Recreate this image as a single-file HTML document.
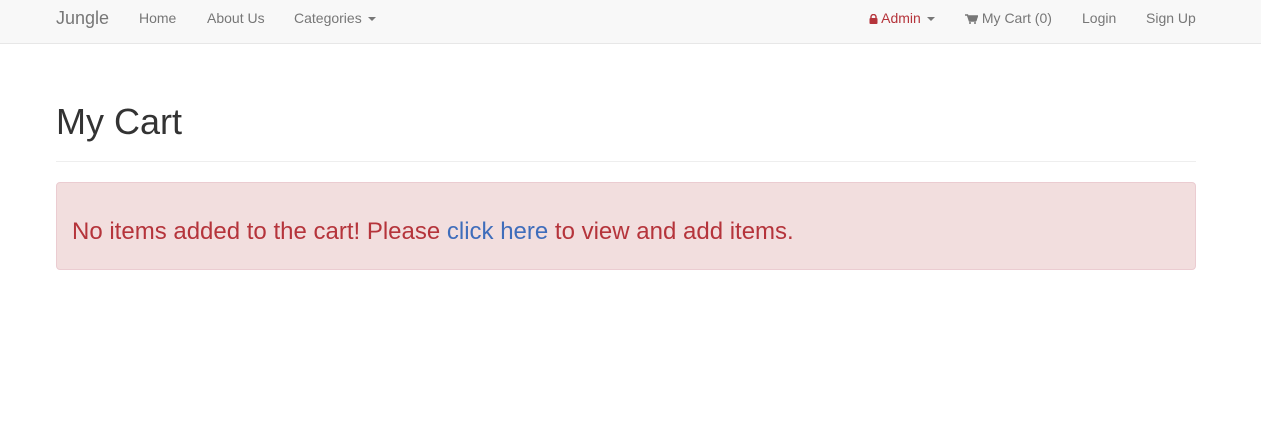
<!DOCTYPE html>
<html><head><style>
body{margin:0;font-family:"Liberation Sans",sans-serif;font-size:14px;color:#333;background:#fff;width:1261px;height:435px;overflow:hidden}
.nav{position:absolute;top:0;left:0;width:1261px;height:43px;background:#f8f8f8;border-bottom:1px solid #e7e7e7}
.nav span{position:absolute;top:0;line-height:36px;color:#777;white-space:nowrap}
.caret{display:inline-block;width:0;height:0;border-top:4px solid #777;border-left:4px solid transparent;border-right:4px solid transparent;vertical-align:middle;margin-left:6px}
h1{position:absolute;left:56px;top:101px;margin:0;font-size:36px;font-weight:500;line-height:42px;color:#333}
.hr{position:absolute;left:56px;top:161px;width:1140px;border-top:1px solid #eee}
.alert{position:absolute;left:56px;top:182px;width:1138px;height:86px;background:#f2dede;border:1px solid #ebccd1;border-radius:4px}
.alert p{margin:0;position:absolute;left:15px;top:35px;font-size:24px;line-height:28px;color:#b5343b}
.alert a{color:#3f6dbb}
</style></head><body>
<div class="nav">
<span style="left:56px;font-size:18px">Jungle</span>
<span style="left:139px">Home</span>
<span style="left:207px">About Us</span>
<span style="left:294px">Categories<i class="caret"></i></span>
<span style="left:869px;color:#b5343b"><svg width="9" height="10" viewBox="0 0 9 10" style="vertical-align:-1px"><path d="M2 4V3a2.5 2.5 0 0 1 5 0v1" fill="none" stroke="#b5343b" stroke-width="1.4"/><rect x="0.5" y="4" width="8" height="6" rx="1" fill="#b5343b"/></svg> Admin<i class="caret"></i></span>
<span style="left:965px"><svg width="13" height="10" viewBox="0 0 13 10" style="vertical-align:-1px"><path d="M0 1h2.5l2 6h6l2-5H3.5" fill="none" stroke="#777" stroke-width="1.5"/><rect x="4" y="2.5" width="8" height="4" fill="#777"/><circle cx="5" cy="9" r="1" fill="#777"/><circle cx="10" cy="9" r="1" fill="#777"/></svg> My Cart (0)</span>
<span style="left:1082px">Login</span>
<span style="left:1146px">Sign Up</span>
</div>
<h1>My Cart</h1>
<div class="hr"></div>
<div class="alert"><p>No items added to the cart! Please <a>click here</a> to view and add items.</p></div>
</body></html>
